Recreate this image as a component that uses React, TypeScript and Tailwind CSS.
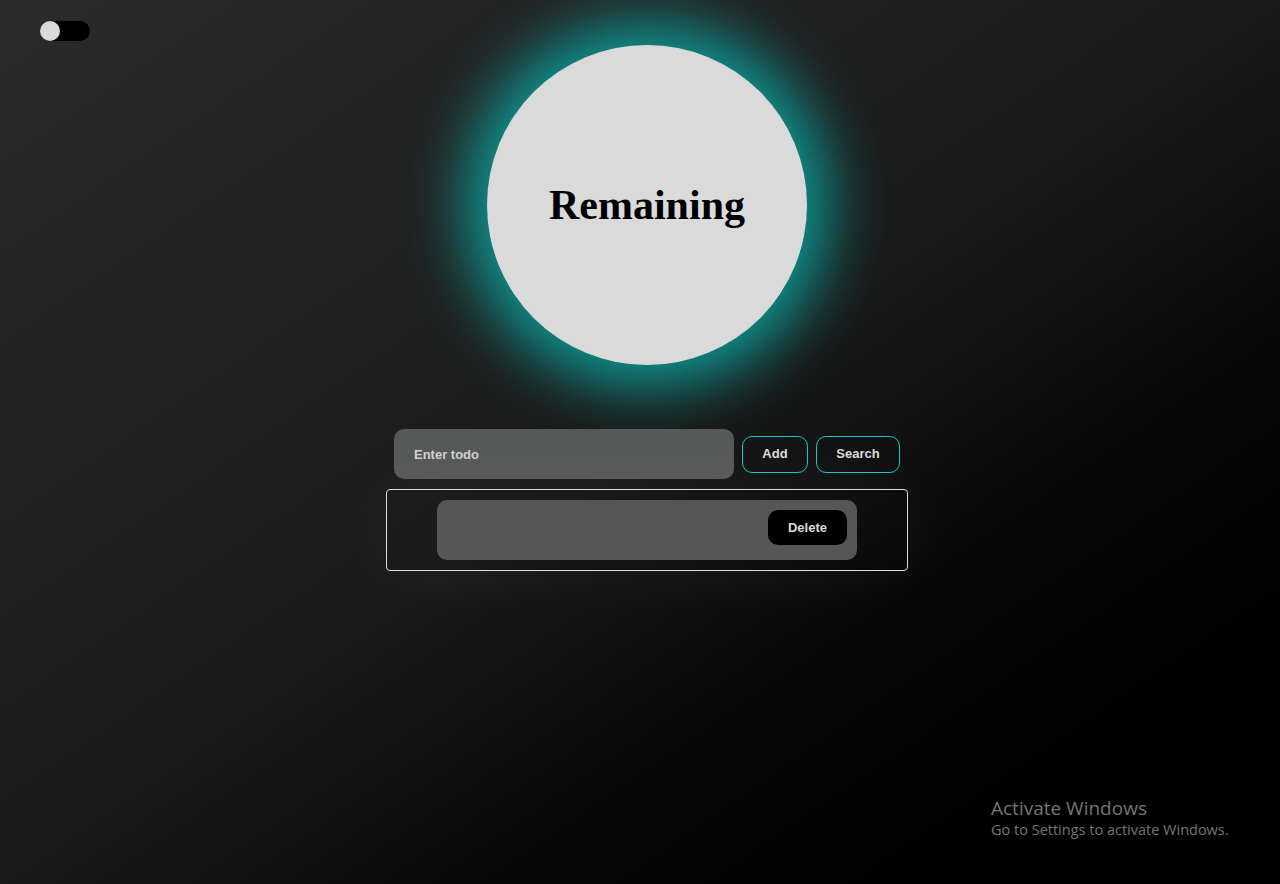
import { useState } from "react";

function Toggle() {
  const [on, setOn] = useState(false);
  return (
    <button
      onClick={() => setOn(!on)}
      className="flex h-5 w-[50px] items-center rounded-full bg-black"
    >
      <span
        className={
          on
            ? "ml-[30px] h-5 w-5 rounded-full bg-[#d9d9d9]"
            : "h-5 w-5 rounded-full bg-[#d9d9d9]"
        }
      />
    </button>
  );
}

export default function App() {
  const [todo, setTodo] = useState("");

  return (
    <main
      className="relative min-h-[884px] w-full overflow-hidden bg-linear-to-br from-[#2b2b2b] via-[#1a1a1a] to-black"
      style={{ fontFamily: '"Liberation Sans", Arial, sans-serif' }}
    >
      <div className="pt-[21px] pl-10">
        <Toggle />
      </div>

      <div className="flex flex-col items-center pl-[14px]">
        <div className="mt-1 flex h-[320px] w-[320px] items-center justify-center rounded-full bg-[#dadada] shadow-[0_0_60px_22px_#0e9a96]">
          <h1
            className="text-[42px] font-bold text-black"
            style={{ fontFamily: '"Liberation Serif", "Times New Roman", serif' }}
          >
            Remaining
          </h1>
        </div>

        <div className="mt-16 flex items-center gap-2">
          <input
            value={todo}
            onChange={(e) => setTodo(e.target.value)}
            placeholder="Enter todo"
            className="h-[50px] w-[340px] rounded-[10px] bg-[#575858] pl-5 text-[13px] font-semibold text-[#d0d0d0] outline-none placeholder:text-[#d0d0d0]"
          />
          <button className="h-[37px] w-[66px] rounded-[10px] border border-[#10c8c8] text-[13px] font-semibold text-[#dcdcdc]">
            Add
          </button>
          <button className="h-[37px] w-[84px] rounded-[10px] border border-[#10c8c8] text-[13px] font-semibold text-[#dcdcdc]">
            Search
          </button>
        </div>

        <div className="mt-[10px] flex h-[82px] w-[522px] justify-center rounded-[4px] border border-[#dcdcdc] pt-[10px] shadow-[0_0_70px_rgba(255,255,255,0.05)]">
          <div className="flex h-[60px] w-[420px] items-start justify-end rounded-[10px] bg-[#565656] pt-[10px] pr-[10px]">
            <button className="h-[35px] w-[79px] rounded-[10px] bg-black text-[13px] font-semibold text-[#dcdcdc]">
              Delete
            </button>
          </div>
        </div>
      </div>

      <div
        className="absolute top-[796px] left-[991px] text-[#747474]"
        style={{ fontFamily: '"Open Sans", "Noto Sans", sans-serif' }}
      >
        <p className="text-[19px] leading-6">Activate Windows</p>
        <p className="text-[14.5px] leading-5">Go to Settings to activate Windows.</p>
      </div>
    </main>
  );
}
